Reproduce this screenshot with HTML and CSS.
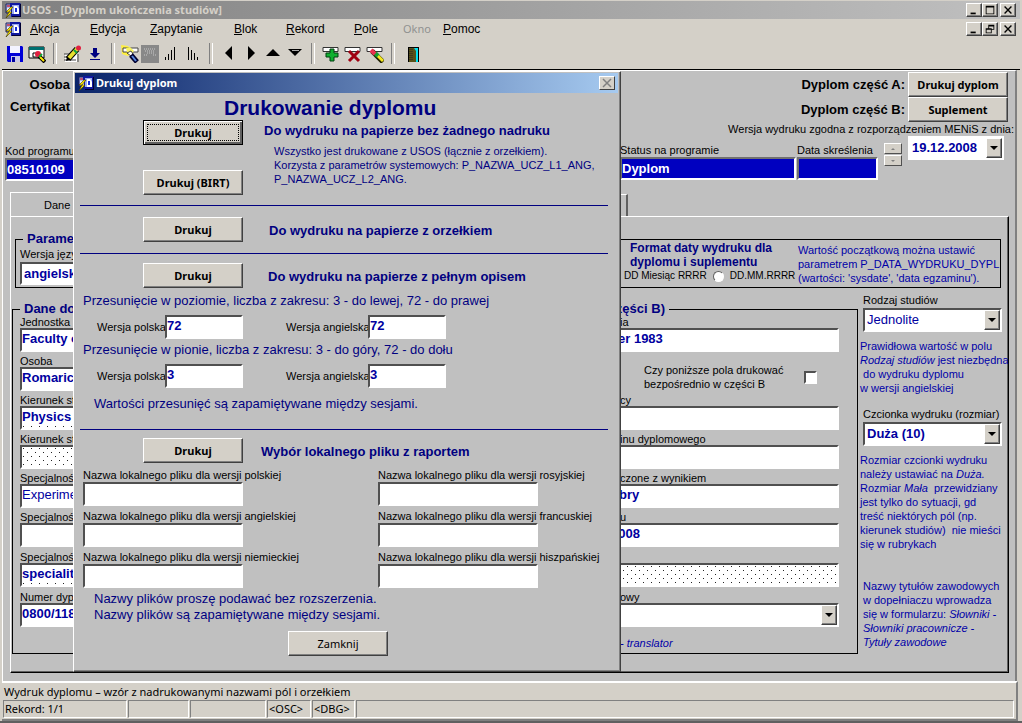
FILE: index.html
```html
<!DOCTYPE html>
<html lang="pl">
<head>
<meta charset="utf-8">
<title>USOS - [Dyplom ukończenia studiów]</title>
<link rel="stylesheet" href="styles.css">
</head>
<body>
<svg class="defs" width="0" height="0" aria-hidden="true">
  <symbol id="app-icon" viewBox="0 0 16 16">
    <path d="M1 2h9v9H1z" fill="#a8b4e8" stroke="#202060"/>
    <path d="M2 3h3v2H2z" fill="#c05070"/>
    <path d="M2 6h4v4H2z" fill="#e8ecff"/>
    <path d="M5 1h10l1 1v13H6V5H5z" fill="#1018a0"/>
    <path d="M7 3h7v9H7z" fill="#9cacf0"/>
    <path d="M9 4h3l2 3v5H9z" fill="#fff"/>
    <path d="M10 6h2v4h-2z" fill="#1830d8"/>
    <path d="M15 2h1v13H7v-1h8z" fill="#000030"/>
    <path d="M6 5 1 10h3l-3 6 6-6H4l4-5z" fill="#ffe800" stroke="#383000" stroke-width=".6"/>
  </symbol>
</svg>
<div class="app">
  <header class="titlebar">
    <svg class="icon16"><use href="#app-icon"/></svg>
    <h1>USOS - [Dyplom ukończenia studiów]</h1>
    <div class="winbtns">
      <button aria-label="Minimalizuj"><svg viewBox="0 0 16 14"><path d="M4 10h6v2H4z"/></svg></button>
      <button aria-label="Maksymalizuj"><svg viewBox="0 0 16 14"><path d="M3 2h10v10H3zM4 4v7h8V4z" fill-rule="evenodd"/></svg></button>
      <button class="apart" aria-label="Zamknij okno"><svg viewBox="0 0 16 14"><path d="M4 3l8 8M12 3l-8 8" stroke="#000" stroke-width="1.6"/></svg></button>
    </div>
  </header>
  <nav class="menubar">
    <svg class="icon16"><use href="#app-icon"/></svg>
    <div class="menu">
      <button><u>A</u>kcja</button><button><u>E</u>dycja</button><button><u>Z</u>apytanie</button><button><u>B</u>lok</button><button><u>R</u>ekord</button><button><u>P</u>ole</button><button class="off" disabled>Okno</button><button><u>P</u>omoc</button>
    </div>
    <div class="winbtns">
      <button aria-label="Minimalizuj formularz"><svg viewBox="0 0 16 14"><path d="M4 10h6v2H4z"/></svg></button>
      <button aria-label="Przywróć formularz"><svg viewBox="0 0 16 14"><path d="M6 2h7v6h-3v4H3V6h3zM7 4v2h3v1h2V4zM4 8v3h5V8z" fill-rule="evenodd"/></svg></button>
      <button class="apart" aria-label="Zamknij formularz"><svg viewBox="0 0 16 14"><path d="M4 3l8 8M12 3l-8 8" stroke="#000" stroke-width="1.6"/></svg></button>
    </div>
  </nav>
  <div class="toolbar">
    <button aria-label="Zapisz"><svg viewBox="0 0 18 18"><path d="M1 1h15l1 1v15H2l-1-1z" fill="#0000d8"/><path d="M4 1h10v7H4z" fill="#f4f4ff"/><path d="M5 11h9v6H5z" fill="#c8c8e8"/><path d="M6 12h3v5H6z" fill="#0000a0"/></svg></button>
    <button aria-label="Drukuj ekran"><svg viewBox="0 0 18 18"><path d="M1 2h15v11H1z" fill="#fff" stroke="#000"/><path d="M1 2h15v3H1z" fill="#007070"/><path d="M5 8h6v4H5z" fill="#fff" stroke="#000"/><path d="M11 11l6 6" stroke="#000" stroke-width="4"/><path d="M12 12l4 4" stroke="#ffe800" stroke-width="2"/><circle cx="10" cy="9" r="3" fill="#e02040"/><path d="M11 12l3-3" stroke="#10a030" stroke-width="2"/></svg></button>
    <i></i>
    <button aria-label="Edytuj"><svg viewBox="0 0 18 18"><path d="M1 9h12v8H1z" fill="#fff"/><path d="M0 9h6M0 12h5M0 15h12M14 9v8" stroke="#444"/><path d="M4 14 13 4" stroke="#000" stroke-width="6"/><path d="M5 13 13 4" stroke="#e8e030" stroke-width="4"/><path d="M10 5l3 3" stroke="#10a040" stroke-width="2"/><circle cx="14.500" cy="3" r="2.500" fill="#e02040"/><path d="M2 16l1-4 3 3z" fill="#000"/></svg></button>
    <button aria-label="Wykonaj"><svg viewBox="0 0 18 18"><path d="M7 3h4v5h3l-5 5-5-5h3zM4 14h10v1H4z" fill="#000080"/></svg></button>
    <i></i>
    <button class="w20" aria-label="Zapytanie"><svg viewBox="0 0 18 18"><path d="M0 0l7 1 5 5-5 5-6-2z" fill="#fff040"/><path d="M2 3h15v4H2z" fill="#fff" stroke="#444"/><path d="M5 3l4-1 4 4-4 4-3-3z" fill="#f8f460"/><path d="M6 8l4-2 2 3-2 2z" fill="#fff" stroke="#222" stroke-width=".8"/><path d="M10 10l6 7" stroke="#000030" stroke-width="5"/><path d="M11 11l4 5" stroke="#5888e0" stroke-width="2"/></svg></button>
    <button class="w20" aria-label="Filtr"><svg viewBox="0 0 18 18"><path d="M0 0h18v18H0z" fill="#888"/><path d="M3 4h12M4 6h10M6 8h7M3 10h3M12 10h3" stroke="#c8c8c8" stroke-dasharray="1 1"/></svg></button>
    <button class="w20" aria-label="Sortuj rosnąco"><svg viewBox="0 0 18 18"><path d="M4.500 12v3M7.500 9v6M10.500 5v10M13.500 2v13" stroke="#000"/></svg></button>
    <button aria-label="Sortuj malejąco"><svg viewBox="0 0 18 18"><path d="M4.500 2v13M7.500 5v10M10.500 8v7M13.500 12v3" stroke="#000"/></svg></button>
    <i></i>
    <button aria-label="Poprzedni"><svg viewBox="0 0 18 18"><path d="M12 1v14L5 8z"/></svg></button>
    <button aria-label="Następny"><svg viewBox="0 0 18 18"><path d="M6 1v14l7-7z"/></svg></button>
    <button aria-label="W górę"><svg viewBox="0 0 18 18"><path d="M2 11h14L9 4z"/></svg></button>
    <button aria-label="W dół"><svg viewBox="0 0 18 18"><path d="M2 4h14l-7 7z"/><path d="M6 5.500h7" stroke="#aaa"/></svg></button>
    <i></i>
    <button aria-label="Dodaj rekord"><svg viewBox="0 0 18 18"><path d="M1 2.500h15v4H1z" fill="#fff" stroke="#333"/><path d="M8 4h4v4h4v4h-4v4H8v-4H4V8h4z" fill="#10b030" stroke="#004010"/></svg></button>
    <button aria-label="Usuń rekord"><svg viewBox="0 0 18 18"><path d="M1 2.500h15v4H1z" fill="#fff" stroke="#333"/><path d="M5 6l10 10M15 6 5 16" stroke="#a00010" stroke-width="3"/></svg></button>
    <button aria-label="Wyczyść rekord"><svg viewBox="0 0 18 18"><path d="M1 2.500h15v4H1z" fill="#fff" stroke="#333"/><path d="M6 6l11 11" stroke="#202000" stroke-width="5"/><path d="M10 9l7 7" stroke="#f4e820" stroke-width="3"/><path d="M9 8l3 3" stroke="#10a030" stroke-width="4"/><path d="M5 5l4 4" stroke="#e83050" stroke-width="4"/></svg></button>
    <i class="wide"></i>
    <button aria-label="Wyjście"><svg viewBox="0 0 18 18"><path d="M4 2h11v15H4z" fill="#000"/><path d="M10 3h4v14h-4z" fill="#00e0f0"/><path d="M5 3h5l2 3v11H5z" fill="#585018"/><path d="M6 4v12M8 4v12" stroke="#222" stroke-dasharray="1 1"/></svg></button>
  </div>

  <main class="canvas">
    <section class="record">
      <div class="ident">
        <b>Osoba</b>
        <b>Certyfikat</b>
        <label for="kod">Kod programu</label>
        <input id="kod" class="key" value="08510109">
      </div>
      <div class="actions">
        <div class="act"><b>Dyplom część A:</b><button class="btn">Drukuj dyplom</button></div>
        <div class="act"><b>Dyplom część B:</b><button class="btn">Suplement</button></div>
        <label class="ver" for="wersja">Wersja wydruku zgodna z rozporządzeniem MENiS z dnia:</label>
        <div class="status">
          <div class="stat"><label for="status">Status na programie</label><input id="status" class="key" value="Dyplom"></div>
          <div class="skr"><label for="skr">Data skreślenia</label><input id="skr" class="key"></div>
          <div class="spin"><button aria-label="Wyżej"><svg viewBox="0 0 8 4"><path d="M2 3h4L4 1z"/></svg></button><button aria-label="Niżej"><svg viewBox="0 0 8 4"><path d="M2 1h4L4 3z"/></svg></button></div>
          <div class="combo date"><select id="wersja"><option>19.12.2008</option></select><span></span></div>
        </div>
      </div>
    </section>

    <div class="tabs"><button class="tab on">Dane dyplomu</button><button class="tab" aria-label="Kolejna zakładka"></button></div>

    <section class="panel">
      <fieldset class="params">
        <legend>Parametry</legend>
        <div class="lang">
          <label for="jez">Wersja językowa</label>
          <div class="combo"><select id="jez"><option>angielska</option></select><span></span></div>
        </div>
        <div class="fmt">
          <strong>Format daty wydruku dla<br>dyplomu i suplementu</strong>
          <div class="radios"><label for="fmt">DD Miesiąc RRRR</label><input type="radio" id="fmt" name="fmt"><span>DD.MM.RRRR</span></div>
        </div>
        <p class="note">Wartość początkową można ustawić<br>parametrem P_DATA_WYDRUKU_DYPL<br>(wartości: 'sysdate', 'data egzaminu').</p>
      </fieldset>

      <div class="split">
        <fieldset class="data">
          <legend><span>Dane do</span><span>(części B)</span></legend>
          <div class="col left">
            <div class="row"><label for="l1">Jednostka org.</label><input id="l1" value="Faculty of"></div>
            <div class="row"><label for="l2">Osoba</label><input id="l2" value="Romaric"></div>
            <div class="row"><label for="l3">Kierunek st</label><input id="l3" class="dots filled" value="Physics"></div>
            <div class="row"><label for="l4">Kierunek st</label><input id="l4" class="dots"></div>
            <div class="row"><label for="l5">Specjalność</label><input id="l5" class="light" value="Experimental"></div>
            <div class="row"><label for="l6">Specjalność</label><input id="l6"></div>
            <div class="row more"><label for="l7">Specjalność</label><input id="l7" class="dots filled" value="speciality"></div>
            <div class="row more"><label for="l8">Numer dyp</label><input id="l8" value="0800/1187"></div>
          </div>
          <div class="col right">
            <div class="row"><label for="r1">ia</label><input id="r1" value="er 1983"></div>
            <div class="check"><label for="cz">Czy poniższe pola drukować<br>bezpośrednio w części B</label><input type="checkbox" id="cz"></div>
            <div class="row"><label for="r3">cy</label><input id="r3"></div>
            <div class="row"><label for="r4">inu dyplomowego</label><input id="r4"></div>
            <div class="row"><label for="r5">czone z wynikiem</label><input id="r5" value="obry"></div>
            <div class="row"><label for="r6">u</label><input id="r6" value="2008"></div>
            <div class="row more"><label for="r7"></label><input id="r7" class="dots" aria-label="Pole dodatkowe"></div>
            <div class="row more"><label for="r8">owy</label><div class="combo"><select id="r8"><option></option></select><span></span></div></div>
            <p class="note tr"><em>- translator</em></p>
          </div>
        </fieldset>
        <aside class="side">
          <label for="rodz">Rodzaj studiów</label>
          <div class="combo"><select id="rodz" class="light"><option>Jednolite</option></select><span></span></div>
          <p class="note">Prawidłowa wartość w polu<br><em>Rodzaj studiów</em> jest niezbędna<br>&nbsp;do wydruku dyplomu<br>w wersji angielskiej</p>
          <label for="czc">Czcionka wydruku (rozmiar)</label>
          <div class="combo"><select id="czc"><option>Duża (10)</option></select><span></span></div>
          <p class="note">Rozmiar czcionki wydruku<br>należy ustawiać na <em>Duża.</em><br>Rozmiar <em>Mała</em>&nbsp; przewidziany<br>jest tylko do sytuacji, gd<br>treść niektórych pól (np.<br>kierunek studiów)&nbsp; nie mieści<br>się w rubrykach</p>
          <p class="note last">Nazwy tytułów zawodowych<br>w dopełniaczu wprowadza<br>się w formularzu: <em>Słowniki -<br>Słowniki pracownicze -<br>Tytuły zawodowe</em></p>
        </aside>
      </div>
    </section>

    <div class="dialog" role="dialog" aria-labelledby="dlg-title">
      <div class="dlg-bar">
        <svg class="icon16"><use href="#app-icon"/></svg>
        <span id="dlg-title">Drukuj dyplom</span>
        <button aria-label="Zamknij okno dialogowe"><svg viewBox="0 0 14 12"><path d="M3 2l8 8M11 2l-8 8" stroke="#808080" stroke-width="1.5"/></svg></button>
      </div>
      <div class="dlg-body">
        <h2>Drukowanie dyplomu</h2>
        <section class="sec first">
          <div class="stack"><button class="btn focus">Drukuj</button><button class="btn">Drukuj (BIRT)</button></div>
          <div class="desc">
            <h3>Do wydruku na papierze bez żadnego nadruku</h3>
            <p>Wszystko jest drukowane z USOS (łącznie z orzełkiem).<br>Korzysta z parametrów systemowych: P_NAZWA_UCZ_L1_ANG,<br>P_NAZWA_UCZ_L2_ANG.</p>
          </div>
        </section>
        <section class="sec second"><button class="btn">Drukuj</button><h3>Do wydruku na papierze z orzełkiem</h3></section>
        <section class="sec third"><button class="btn">Drukuj</button><h3>Do wydruku na papierze z pełnym opisem</h3></section>
        <section class="shift">
          <p>Przesunięcie w poziomie, liczba z zakresu: 3 - do lewej, 72 - do prawej</p>
          <div class="pair">
            <label for="hp">Wersja polska</label><input id="hp" value="72">
            <label for="ha">Wersja angielska</label><input id="ha" value="72">
          </div>
          <p>Przesunięcie w pionie, liczba z zakresu: 3 - do góry, 72 - do dołu</p>
          <div class="pair">
            <label for="vp">Wersja polska</label><input id="vp" value="3">
            <label for="va">Wersja angielska</label><input id="va" value="3">
          </div>
          <p class="indent">Wartości przesunięć są zapamiętywane między sesjami.</p>
        </section>
        <section class="sec fourth"><button class="btn">Drukuj</button><h3>Wybór lokalnego pliku z raportem</h3></section>
        <section class="files">
          <div><label for="f1">Nazwa lokalnego pliku dla wersji polskiej</label><input id="f1"></div>
          <div><label for="f2">Nazwa lokalnego pliku dla wersji rosyjskiej</label><input id="f2"></div>
          <div><label for="f3">Nazwa lokalnego pliku dla wersji angielskiej</label><input id="f3"></div>
          <div><label for="f4">Nazwa lokalnego pliku dla wersji francuskiej</label><input id="f4"></div>
          <div><label for="f5">Nazwa lokalnego pliku dla wersji niemieckiej</label><input id="f5"></div>
          <div><label for="f6">Nazwa lokalnego pliku dla wersji hiszpańskiej</label><input id="f6"></div>
        </section>
        <p class="hint">Nazwy plików proszę podawać bez rozszerzenia.<br>Nazwy plików są zapamiętywane między sesjami.</p>
        <button class="btn plain">Zamknij</button>
      </div>
    </div>
  </main>

  <footer class="statusbar">
    <p>Wydruk dyplomu – wzór z nadrukowanymi nazwami pól i orzełkiem</p>
    <div class="cells"><span>Rekord: 1/1</span><span></span><span></span><span>&lt;OSC&gt;</span><span>&lt;DBG&gt;</span><span></span></div>
  </footer>
</div>
</body>
</html>
```
FILE: styles.css
```css
* { box-sizing: border-box; }
body, h1, h2, h3, p, fieldset, legend { margin: 0; padding: 0; }
body {
  font: 11px/14px "Liberation Sans", Arial, sans-serif;
  color: #000;
  background: #d4d0c8;
}
button, input, select { font: inherit; color: inherit; margin: 0; padding: 0; border-radius: 0; }
button { border: 0; background: none; }
label { white-space: nowrap; }
.defs { position: absolute; }

.app { display: flex; flex-direction: column; min-height: 100vh; padding: 0 2px; border-bottom: 2px solid #606060; }
.icon16 { width: 16px; height: 16px; flex: none; }

/* title and menu bars */
.titlebar {
  display: flex; align-items: center; height: 19px; padding: 0 4px 0 3px;
  border-top: 1px solid #d4d0c8;
  background: linear-gradient(90deg, #808080, #c0c0c0);
}
.titlebar h1 { flex: 1; padding-left: 1px; font: bold 11px/16px "Noto Sans", sans-serif; color: #d4d0c8; white-space: nowrap; }
.winbtns { display: flex; }
.winbtns button {
  width: 16px; height: 14px; background: #d4d0c8;
  border: 1px solid; border-color: #fff #404040 #404040 #fff; box-shadow: inset -1px -1px #808080;
}
.winbtns .apart { margin-left: 2px; }
.winbtns svg { display: block; width: 14px; height: 12px; }
.menubar { display: flex; align-items: center; height: 19px; padding: 0 4px 0 3px; }
.menu {
  flex: 1; display: grid; padding-left: 9px; font-size: 12px; line-height: 16px;
  grid-template-columns: 60px 60px 84px 52px 68px 49px 40px 60px;
}
.menu button { text-align: left; }
.menu .off { color: #909090; font: 11px/16px "Noto Sans", sans-serif; }

.toolbar { display: flex; align-items: center; height: 32px; padding-left: 2px; border-bottom: 1px solid #000; }
.toolbar button { width: 22px; height: 22px; display: grid; place-items: center; }
.toolbar .w20 { width: 20px; }
.toolbar .w20 + button:not(.w20) { margin-left: 2px; }
.toolbar svg { width: 18px; height: 18px; }
.toolbar i { width: 14px; height: 21px; display: flex; }
.toolbar i::before { content: ""; width: 2px; margin-left: 5px; border-left: 1px solid #808080; border-right: 1px solid #fff; }
.toolbar .wide { width: 16px; }

/* work area */
.canvas {
  position: relative; flex: 1; display: flex; flex-direction: column; margin-right: 3px; padding: 1px 0 8px;
  background: #c0c0c0; border-left: 1px solid #fff; border-top: 1px solid #fff; border-right: 2px solid #808080;
}
.record { display: flex; justify-content: space-between; height: 120px; }
.record b { font-size: 13px; }
.ident { display: flex; flex-direction: column; width: 67px; padding: 4px 0 0 2px; }
.ident b { height: 22px; line-height: 18px; text-align: right; white-space: nowrap; }
.ident label { margin-top: 24px; height: 14px; }
.ident .key { width: 100px; }
.key {
  height: 23px; padding: 0; color: #fff; background: #0000c0; font-size: 13px; font-weight: bold;
  border: 2px solid; border-color: #707070 #fff #fff #707070;
}
.actions { display: flex; flex-direction: column; align-items: flex-end; padding-right: 1px; }
.act { display: flex; align-items: center; gap: 3px; height: 25px; margin-right: 6px; }
.ver { height: 14px; }
.status { display: flex; align-items: flex-start; margin-right: 10px; }
.status > div:not(.combo) { margin-top: 7px; display: flex; flex-direction: column; }
.status label { height: 14px; }
.stat { width: 186px; padding-left: 10px; margin-right: 1px; }
.skr { width: 81px; margin-right: 6px; }
.status .spin { margin: 19px 6px 0 0; gap: 1px; }
.spin button {
  width: 18px; height: 11px; display: grid; place-items: center; background: #d4d0c8;
  border: 1px solid; border-color: #fff #505050 #505050 #fff;
}
.spin svg { width: 8px; height: 4px; fill: #808080; }

.btn {
  width: 100px; height: 25px; background: #d4d0c8; color: #000;
  font: bold 11px/16px "Noto Sans", sans-serif;
  border: 1px solid; border-color: #fff #404040 #404040 #fff; box-shadow: inset -1px -1px #808080;
}
.btn.focus { border-color: #000; box-shadow: inset 1px 1px #fff, inset -2px -2px #606060; outline: 1px dotted #000; outline-offset: -5px; }
.btn.plain { font: 11px/16px "Noto Sans", sans-serif; }

.combo {
  display: flex; height: 24px; background: #fff; color: #0000a0; font-size: 13px; font-weight: bold;
  border: 2px solid; border-color: #505050 #fff #fff #505050;
}
.combo select { flex: 1; min-width: 0; padding-left: 2px; appearance: none; border: 0; background: none; }
.combo span {
  width: 16px; display: grid; place-items: center; background: #d4d0c8; pointer-events: none;
  border: 1px solid; border-color: #fff #404040 #404040 #fff; box-shadow: inset -1px -1px #808080;
}
.combo span::before { content: ""; border: 4px solid transparent; border-top-color: #000; border-bottom: 0; }
.combo .light, input.light { font-weight: normal; }
.date { width: 96px; border-color: #fff; }

/* tabs and panel */
.tabs { display: flex; align-items: flex-end; height: 24px; padding-left: 7px; }
.tab { width: 498px; height: 22px; border-top: 1px solid #fff; border-right: 2px solid #606060; }
.tab.on { width: 120px; height: 24px; padding-left: 33px; text-align: left; border-left: 1px solid #fff; }
.panel {
  flex: 1; margin: 0 6px 0 7px; padding-top: 14px;
  border: 1px solid; border-color: #fff #000 #000 #fff; box-shadow: inset -1px -1px #606060;
}
.panel fieldset { min-width: 0; border: 1px solid #000; }
.panel legend { height: 16px; padding: 0 4px; font-size: 13px; font-weight: bold; line-height: 16px; color: #000080; }
.panel .params { display: flex; height: 57px; margin: 0 7px 0 4px; padding: 0 4px; }
.params legend { margin-left: 3px; }
.lang { width: 200px; }
.lang label { display: block; height: 15px; }
.lang .combo { height: 23px; }
.fmt { margin: -6px 0 0 auto; width: 174px; }
.fmt strong { display: block; padding-left: 6px; font-size: 12px; color: #000080; }
.radios { display: flex; align-items: center; gap: 6px; height: 14px; font-size: 10px; white-space: nowrap; }
input[type="radio"] {
  flex: none; appearance: none; width: 11px; height: 11px; border-radius: 50%; background: #fff;
  border: 1px solid; border-color: #606060 #fff #fff #606060;
}
.note { color: #0000a8; white-space: nowrap; }
.params .note { margin-top: -4px; width: 198px; }

.split { display: flex; }
.panel .data {
  flex: 1; display: flex; justify-content: space-between; height: 353px;
  margin: 13px 0 0 1px; padding: 0 18px 0 7px;
}
.panel .data legend { display: flex; justify-content: space-between; width: calc(100% - 170px); }
.col { display: flex; flex-direction: column; gap: 4px; }
.left { width: 300px; }
.right { width: 239px; }
.row { display: flex; flex-direction: column; }
.row.more { margin-top: 1px; }
.row label { height: 11px; line-height: 10px; }
.row input {
  height: 24px; padding: 0 0 4px 0; background-color: #fff; color: #0000a0; font-size: 13px; font-weight: bold;
  border: 2px solid; border-color: #505050 #fff #fff #505050;
}
.row input.light { font-weight: normal; }
.row .dots {
  background-image: conic-gradient(from 270deg at 1px 1px, #222 90deg, transparent 0), conic-gradient(from 270deg at 1px 1px, #222 90deg, transparent 0);
  background-size: 8px 8px;
  background-position: 1px 1px, 5px 5px;
}
.row .dots.filled {
  background-image: conic-gradient(from 270deg at 1px 1px, #222 90deg, transparent 0);
  background-position: 1px 18px;
  background-repeat: repeat-x;
}
.right .row label { padding-left: 20px; }
.right .row input { padding-left: 16px; }
.right #r5, .right #r6 { padding-left: 9px; }
.check { display: flex; justify-content: space-between; height: 35px; padding: 7px 22px 0 44px; }
.check input {
  appearance: none; width: 13px; height: 13px; margin-top: 8px; background: #fff;
  border: 2px solid; border-color: #505050 #fff #fff #505050;
}
.tr { padding: 5px 0 0 20px; }

.side { width: 150px; padding: 5px 0 0 2px; }
.side label { display: block; height: 15px; padding-left: 3px; }
.side .combo { width: 139px; margin-left: 3px; }
.side .note { margin: 7px 0 12px; }
.side .last { margin: 28px 0 0; padding-left: 3px; }

/* dialog window */
.dialog {
  position: absolute; left: 70px; top: 0; width: 548px; height: 601px; padding: 1px;
  background: #c0c0c0; border: 1px solid; border-color: #fff #404040 #404040 #fff;
  box-shadow: inset -1px -1px #808080;
}
.dlg-bar {
  display: flex; align-items: center; height: 20px; padding: 0 3px; margin-right: 1px;
  background: linear-gradient(90deg, #0a246a, #a6caf0);
}
.dlg-bar span { flex: 1; padding-left: 2px; font: bold 11px/16px "Noto Sans", sans-serif; color: #fff; }
.dlg-bar button { width: 16px; height: 14px; background: #d4d0c8; border: 1px solid; border-color: #fff #404040 #404040 #fff; }
.dlg-bar svg:not(.icon16) { display: block; width: 14px; height: 12px; }
.dlg-body { padding: 2px 11px 0 5px; color: #000080; }
.dlg-body h2 { padding-left: 144px; font-size: 21px; line-height: 25px; height: 25px; }
.dlg-body h3 { font-size: 13px; line-height: 18px; white-space: nowrap; }
.sec { display: flex; padding-left: 63px; border-bottom: 1px solid #000080; }
.first { height: 86px; gap: 21px; }
.stack { display: flex; flex-direction: column; gap: 25px; }
.desc { padding-top: 2px; }
.desc p { padding: 4px 0 0 10px; white-space: nowrap; }
.second { height: 48px; padding-top: 11px; gap: 26px; }
.third, .fourth { border: 0; }
.third { height: 39px; gap: 25px; padding-top: 9px; }
.fourth { height: 38px; gap: 18px; padding-top: 8px; }
.second h3, .third h3, .fourth h3 { padding-top: 5px; }
.shift { height: 137px; border-bottom: 1px solid #000080; }
.shift p { height: 22px; padding-left: 3px; font-size: 13px; line-height: 16px; }
.shift .indent { padding: 5px 0 0 14px; }
.pair { display: flex; align-items: center; height: 24px; margin-bottom: 3px; padding-left: 17px; color: #000; }
.pair label { width: 68px; }
.pair input + label { width: 82px; margin-left: 43px; }
.pair input, .files input {
  height: 24px; background: #fff; color: #0000a0; font-size: 13px; font-weight: bold; padding: 0 0 4px;
  border: 2px solid; border-color: #505050 #fff #fff #505050;
}
.pair input { width: 78px; }
.files { display: grid; grid-template-columns: 295px 1fr; row-gap: 3px; padding-left: 3px; color: #000; }
.files div { display: flex; flex-direction: column; height: 38px; }
.files label { height: 14px; }
.files input { width: 160px; }
.hint { padding: 3px 0 0 14px; font-size: 13px; line-height: 16px; }
.dlg-body .plain { display: block; margin: 8px 0 0 208px; }

/* status bar */
.statusbar {
  height: 40px; margin-right: 2px; padding: 0 2px 0 1px; font: 11px/17px "Noto Sans", sans-serif;
  border-top: 2px solid #fff; border-right: 2px solid #808080; border-bottom: 2px solid #808080;
}
.statusbar p { padding-left: 1px; }
.cells { display: grid; grid-template-columns: 124px 61px 76px 44px 43px 1fr; gap: 1px; height: 18px; }
.cells span { padding-left: 1px; border: 1px solid; border-color: #808080 #fff #fff #808080; white-space: nowrap; line-height: 16px; }
```
